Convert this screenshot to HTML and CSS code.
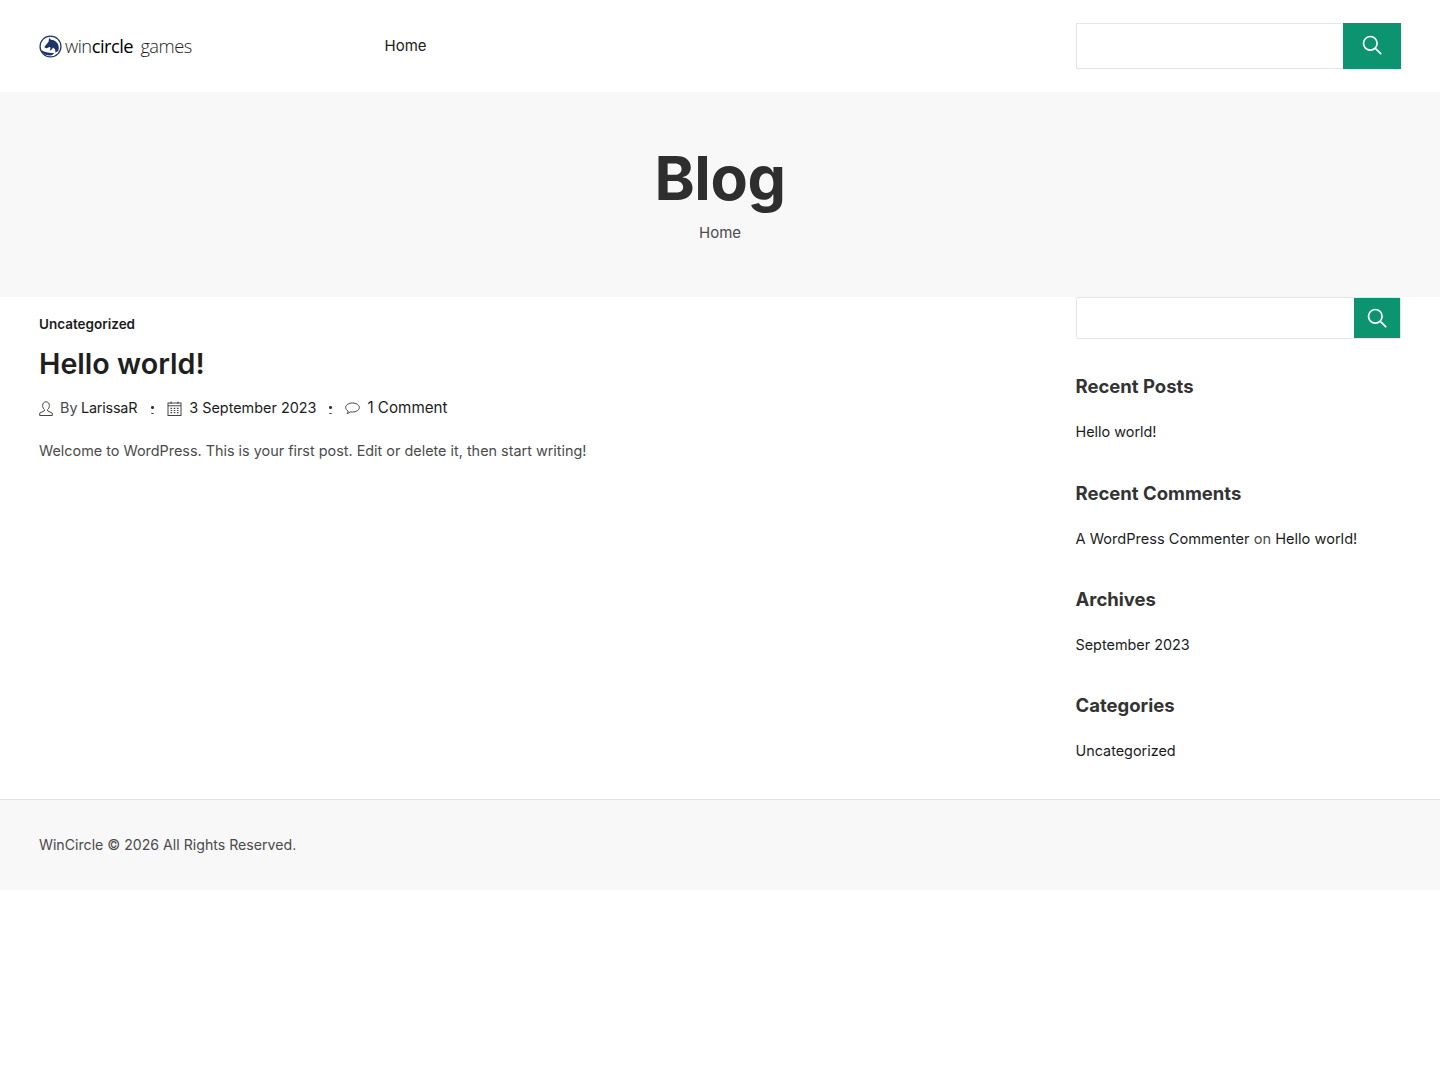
FILE: index.html
```html
<!DOCTYPE html>
<html lang="en">
<head>
<meta charset="utf-8">
<title>Blog – WinCircle Games</title>
<link rel="stylesheet" href="styles.css">
</head>
<body>
<header class="site-header">
  <a class="logo" href="#">
    <svg class="logo-mark" viewBox="0 0 24 24" width="23" height="23" aria-hidden="true">
      <circle cx="12" cy="12" r="10.900" fill="#fff" stroke="#1d3566" stroke-width="1.300"/>
      <path d="M5.500 12.500 10 7 10.500 3l2 2c4 .2 7.400 3 8 7 .2 1.600.1 3-.3 4.500l-3.200 2c.5-2.500-.3-4.500-2.500-5.500-.4 1.600-1.500 2.500-3.500 3.500 1-1.500 1.200-3 .5-4.300L7.500 14z" fill="#1d3566"/>
      <path d="M3 16c3 2.300 8 3.200 13 2.800l-2.500 2.400c-4 .6-8-.7-10-3z" fill="#1d3566"/>
    </svg>
    <span class="logo-text">win<b>circle</b> <i>games</i></span>
  </a>
  <nav class="main-nav"><a href="#">Home</a></nav>
  <form class="search search-top">
    <input class="search-input" type="text" aria-label="Search">
    <button class="search-btn" type="button" aria-label="Search">
      <svg viewBox="0 0 20 20" width="20" height="20"><circle cx="8.300" cy="8.300" r="6.800" fill="none" stroke="#fff" stroke-width="1.700"/><path d="M13.300 13.300 19.200 19.200" stroke="#fff" stroke-width="1.700" fill="none"/></svg>
    </button>
  </form>
</header>

<section class="hero">
  <h1>Blog</h1>
  <p class="crumb">Home</p>
</section>

<div class="content">
  <main class="post">
    <a class="cat" href="#">Uncategorized</a>
    <h2 class="post-title">Hello world!</h2>
    <div class="meta">
      <span class="meta-item">
        <svg class="icon-user" viewBox="0 0 14 15" width="14" height="15"><path d="M7 .8c2 0 3.400 1.500 3.400 3.700 0 1.800-.8 3.300-1.800 4v1.300l4.700 2.300v2.400H.7v-2.400l4.700-2.300V8.500c-1-.7-1.800-2.200-1.800-4C3.600 2.300 5 .8 7 .8z" fill="none" stroke="#444" stroke-width="1"/></svg>
        <span class="by">By</span> <a class="author" href="#">LarissaR</a>
      </span>
      <span class="sep"></span>
      <span class="meta-item">
        <svg viewBox="0 0 15 15" width="15" height="15"><rect x="1" y="2" width="13" height="12.500" fill="none" stroke="#444" stroke-width="1"/><path d="M1 4.800h13M4 .5v2.500M11 .5v2.500" stroke="#444" stroke-width="1" fill="none"/><path d="M3.500 7.300h1.600M6.700 7.300h1.600M9.900 7.300h1.600M3.500 9.500h1.600M6.700 9.500h1.600M9.900 9.500h1.600M3.500 11.700h1.600M6.700 11.700h1.600M9.900 11.700h1.600" stroke="#444" stroke-width="1.200" fill="none"/></svg>
        <a href="#">3 September 2023</a>
      </span>
      <span class="sep sep-last"></span>
      <span class="meta-item">
        <svg viewBox="0 0 15 15" width="15" height="15"><path d="M7.500 2c3.700 0 6.800 1.900 6.800 4.500S11.200 11 7.500 11c-.7 0-1.400-.1-2-.2-.8.800-2 1.500-3.500 1.700.7-.8 1.100-1.600 1.200-2.500C1.700 9.200.7 7.900.7 6.500.7 3.900 3.800 2 7.500 2z" fill="none" stroke="#444" stroke-width="1"/></svg>
        <a class="comments" href="#">1 Comment</a>
      </span>
    </div>
    <p class="excerpt">Welcome to WordPress. This is your first post. Edit or delete it, then start writing!</p>
  </main>

  <aside class="sidebar">
    <form class="search search-side">
      <input class="search-input" type="text" aria-label="Search">
      <button class="search-btn" type="button" aria-label="Search">
        <svg viewBox="0 0 20 20" width="20" height="20"><circle cx="8.300" cy="8.300" r="6.800" fill="none" stroke="#fff" stroke-width="1.700"/><path d="M13.300 13.300 19.200 19.200" stroke="#fff" stroke-width="1.700" fill="none"/></svg>
      </button>
    </form>
    <section class="widget">
      <h3>Recent Posts</h3>
      <p><a href="#">Hello world!</a></p>
    </section>
    <section class="widget">
      <h3>Recent Comments</h3>
      <p class="wide"><a href="#">A WordPress Commenter</a> on <a href="#">Hello world!</a></p>
    </section>
    <section class="widget">
      <h3>Archives</h3>
      <p><a href="#">September 2023</a></p>
    </section>
    <section class="widget">
      <h3>Categories</h3>
      <p><a href="#">Uncategorized</a></p>
    </section>
  </aside>
</div>

<footer class="site-footer">WinCircle © 2026 All Rights Reserved.</footer>
</body>
</html>
```

FILE: styles.css
```css
* { box-sizing: border-box; }
html, body { margin: 0; padding: 0; }
body {
  background: #fff;
  color: #4b4b4b;
  font-family: Inter, "Open Sans", "Liberation Sans", sans-serif;
  font-size: 14.4px;
  line-height: 24px;
}
a { color: #1c1c1c; text-decoration: none; }
p { margin: 0; }

.site-header {
  height: 92px;
  padding: 0 39px;
  display: flex;
  align-items: center;
}
.logo {
  width: 345.500px;
  display: flex;
  align-items: center;
  gap: 3px;
  flex: none;
}
.logo-mark { flex: none; }
.logo-text {
  font-family: "Open Sans", sans-serif;
  font-size: 18.300px;
  font-weight: 300;
  letter-spacing: -.5px;
  color: #222;
}
.logo-text b { font-weight: 400; color: #000; }
.logo-text i { font-style: normal; margin-left: 3px; }
.main-nav { flex: 1; margin-top: -1px; }
.main-nav a { font-size: 15px; font-weight: 400; }

.search { display: flex; background: #fff; border: 1px solid #e5e5e5; }
.search-input { flex: 1; min-width: 0; border: 0; background: transparent; outline: 0; }
.search-btn {
  border: 0;
  padding: 0;
  background: #0b946f;
  display: flex;
  align-items: center;
  justify-content: center;
}
.search-top { width: 325px; height: 46px; border-right: 0; }
.search-top .search-btn { width: 58px; margin: -1px 0; padding-bottom: 2px; }
.search-side { width: 325px; height: 42px; border-radius: 2px; margin-bottom: -1px; }
.search-side .search-btn { width: 46px; }

.hero {
  height: 205px;
  background: #f8f8f8;
  text-align: center;
  padding-top: 50px;
}
.hero h1 {
  margin: 0;
  font-size: 61px;
  line-height: 72px;
  font-weight: 700;
  color: #2e2e2e;
  letter-spacing: -.4px;
}
.crumb { margin-top: 7px; font-size: 15px; }

.content {
  height: 502px;
  padding: 0 39px;
  display: flex;
  justify-content: space-between;
}
.post { padding-top: 16px; }
.cat { display: block; font-size: 13.500px; font-weight: 600; line-height: 22px; color: #1c1c1c; }
.post-title {
  margin: 10px 0 0;
  font-size: 28.700px;
  line-height: 38px;
  font-weight: 600;
  color: #1f1f1f;
}
.meta {
  margin-top: 13px;
  display: flex;
  align-items: center;
  height: 24px;
}
.meta-item { display: flex; align-items: center; gap: 7px; }
.meta-item svg { flex: none; }
.by { margin-right: -3.500px; }
.author { letter-spacing: -.2px; }
.comments { font-size: 15.200px; }
.sep {
  width: 3px;
  height: 10px;
  margin: 2px 13px 0 14px;
  background: radial-gradient(circle, #333 1.300px, transparent 1.600px) 0 0 / 3px 7px repeat-y;
}
.sep-last { margin-left: 13px; }
.excerpt { margin-top: 19px; }

.sidebar { width: 325px; flex: none; }
.widget { margin: 35.300px 0 0 -.5px; }
.widget h3 {
  margin: 0 0 21px;
  font-size: 18.500px;
  line-height: 26px;
  font-weight: 700;
  color: #333;
}
.wide { font-size: 14.600px; }

.site-footer {
  height: 91px;
  padding: 0 39px;
  display: flex;
  align-items: center;
  background: #f8f8f8;
  border-top: 1px solid #e2e2e2;
  font-size: 14.150px;
}
```
